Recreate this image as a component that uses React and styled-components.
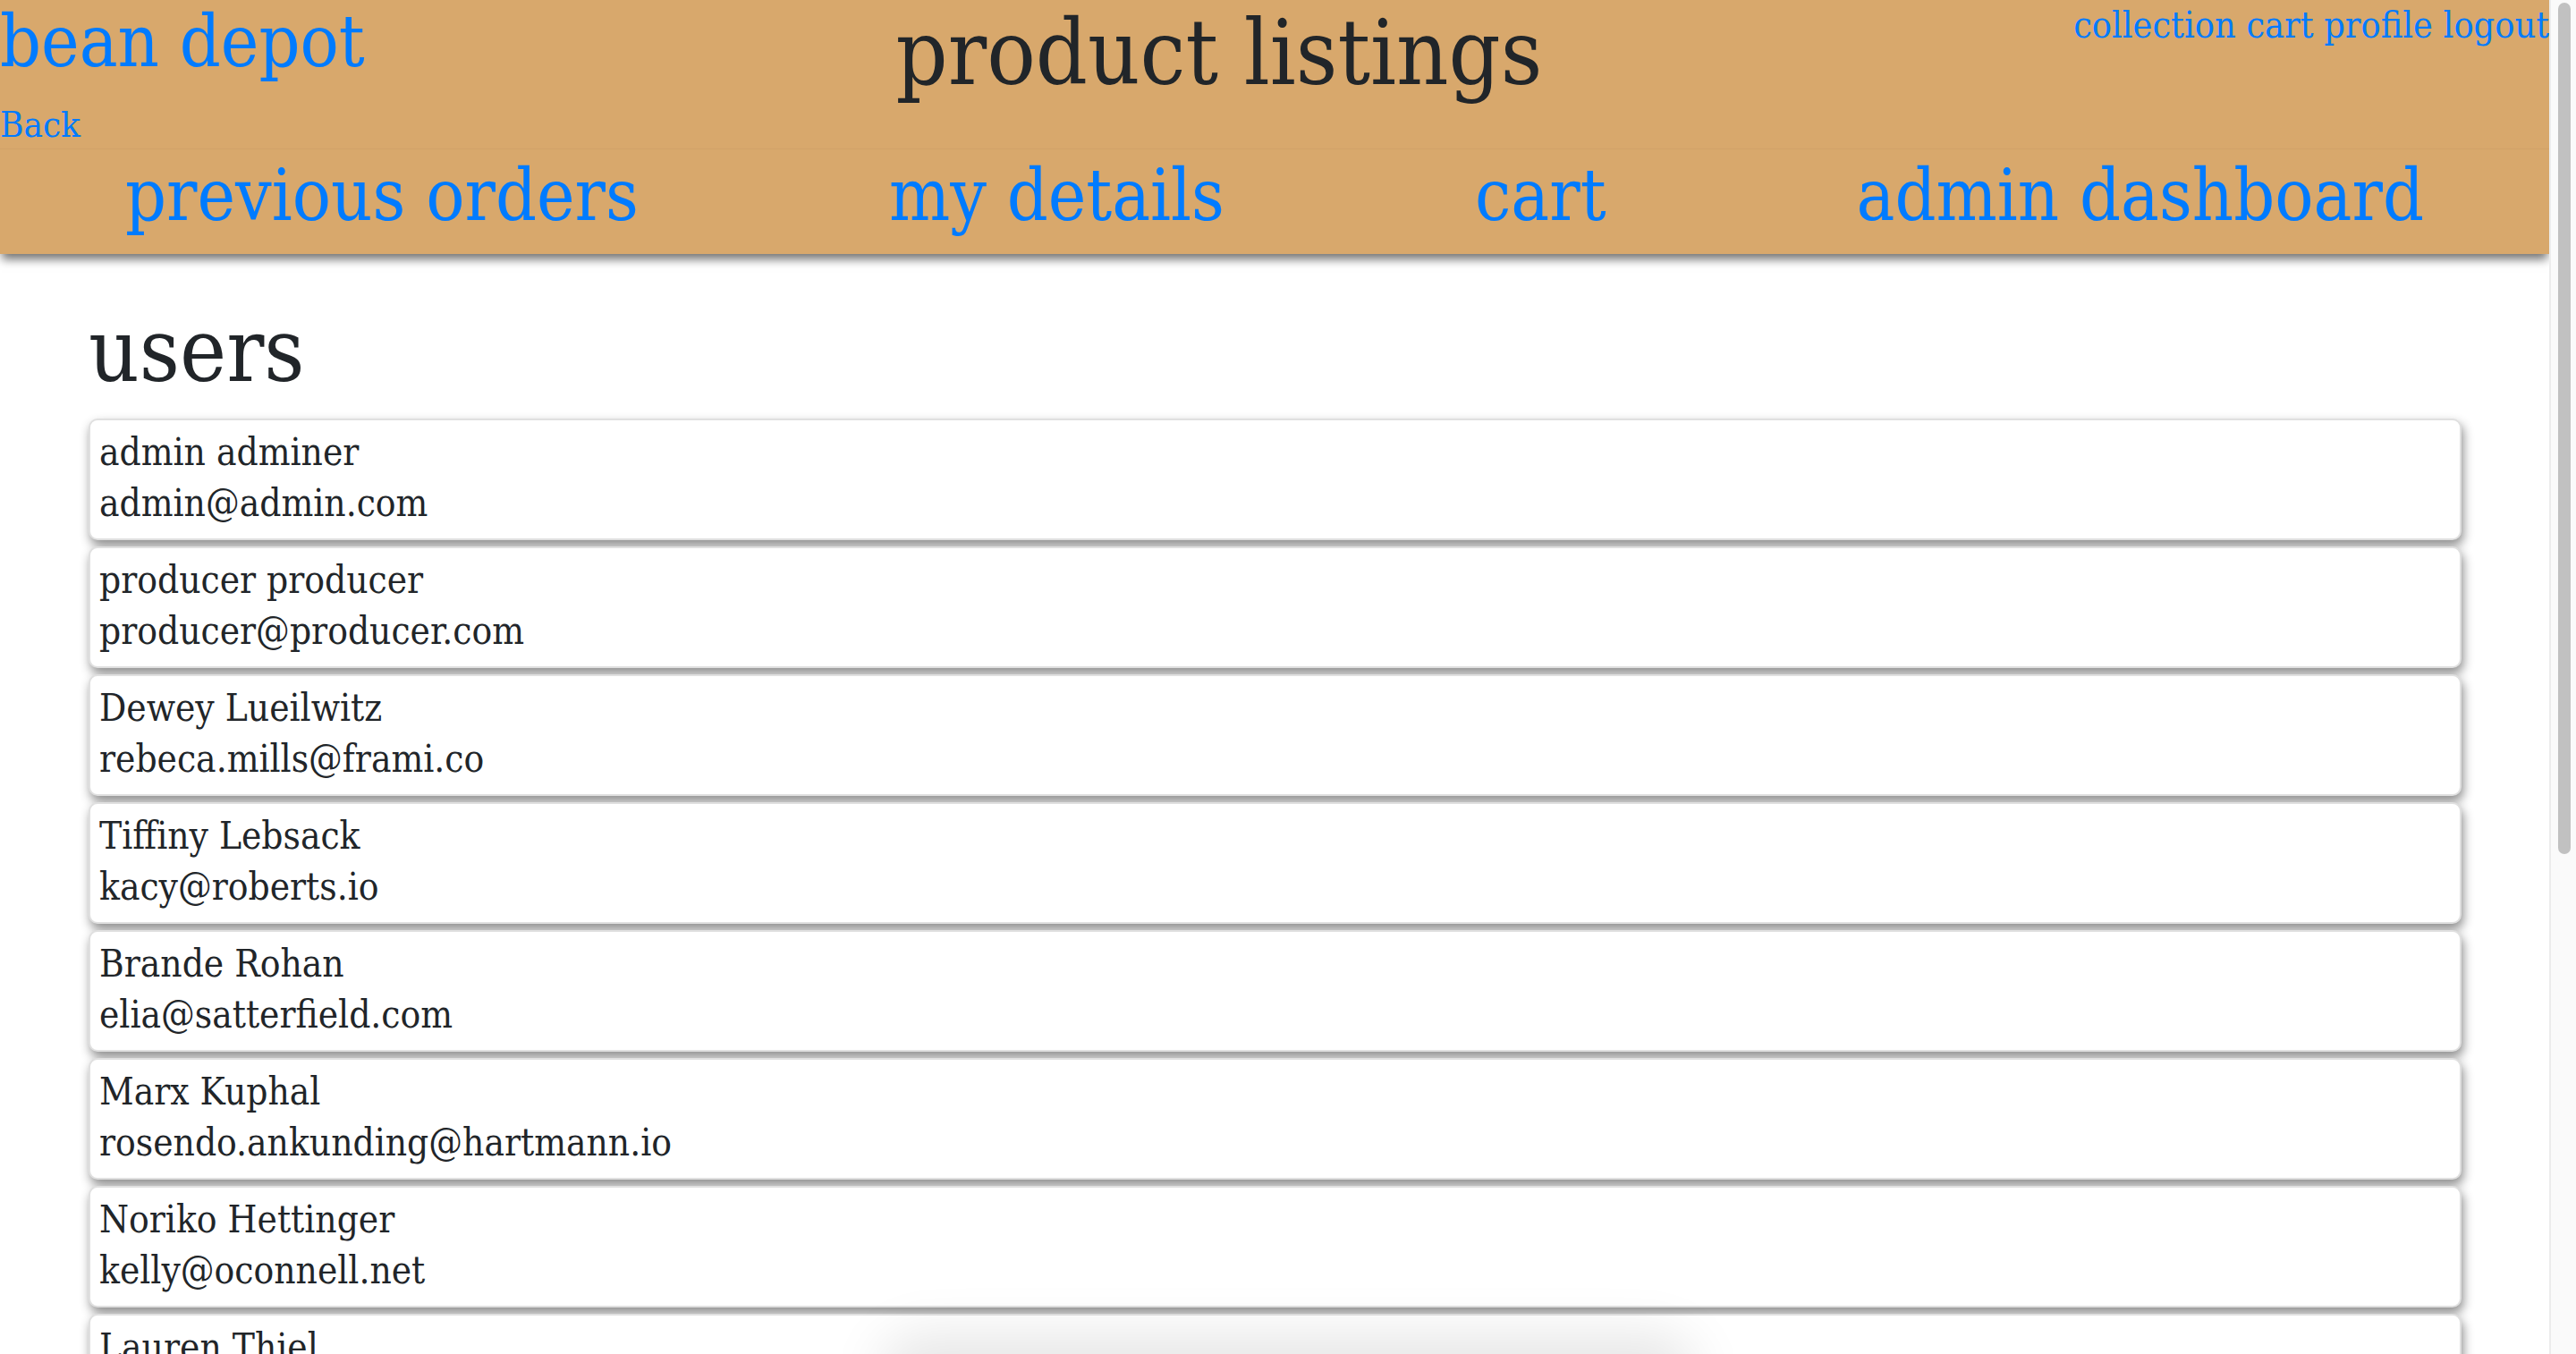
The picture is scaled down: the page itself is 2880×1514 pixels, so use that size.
import React from 'react'
import styled, { createGlobalStyle } from 'styled-components'

const GlobalStyle = createGlobalStyle`
  html, body {
    margin: 0;
    padding: 0;
    height: 100%;
    overflow: hidden;
    background: #fff;
  }
  body {
    font-family: "DejaVu Serif Condensed", "DejaVu Serif", serif;
    color: #212529;
  }
  a {
    color: #007bff;
    text-decoration: none;
  }
`

const Shell = styled.div`
  display: flex;
  height: 100vh;
`

const Page = styled.div`
  flex: 1;
  min-width: 0;
  overflow: hidden;
`

const ScrollRail = styled.div`
  width: 30px;
  box-sizing: border-box;
  padding: 3px 6px 0 8px;
  background: #fafafa;
  border-left: 2px solid #ececec;
`

const ScrollThumb = styled.div`
  height: 952px;
  border-radius: 8px;
  background: #c1c1c1;
`

const Navbar = styled.header`
  position: relative;
  z-index: 2;
  background: #d8a86c;
  box-shadow: 0 8px 10px -2px rgba(0, 0, 0, 0.55);
`

const TopRow = styled.div`
  display: flex;
  justify-content: space-between;
  align-items: flex-start;
  height: 166px;
`

const BrandBlock = styled.div`
  display: flex;
  flex-direction: column;
  align-items: flex-start;
`

const Brand = styled.a`
  font-size: 80px;
  line-height: 94px;
`

const BackLink = styled.a`
  margin-top: 21px;
  font-size: 40px;
  line-height: 48px;
`

const PageTitle = styled.h1`
  margin: 0;
  font-size: 101px;
  line-height: 118px;
  font-weight: 400;
`

const TopLinks = styled.nav`
  font-size: 41px;
  line-height: 56px;
  white-space: nowrap;
`

const NavRow = styled.nav`
  display: flex;
  justify-content: space-around;
  align-items: flex-start;
  height: 118px;
  box-sizing: border-box;
  border-top: 1px solid rgba(0, 0, 0, 0.03);
`

const NavLink = styled.a`
  font-size: 80px;
  line-height: 104px;
`

const Main = styled.main`
  padding: 0 98px 70px 99px;
`

const Heading = styled.h1`
  margin: 50px 0 18px;
  font-size: 98px;
  line-height: 116px;
  font-weight: 400;
`

const UserList = styled.ul`
  list-style: none;
  margin: 0;
  padding: 0;
  display: flex;
  flex-direction: column;
  gap: 7px;
`

const UserCard = styled.li`
  background: #fff;
  border: 2px solid #e0e0e0;
  border-radius: 10px;
  padding: 7px 10px 11px;
  font-size: 42px;
  line-height: 57px;
  box-shadow: 2px 6px 12px rgba(0, 0, 0, 0.45);
`

const Line = styled.div``

const DockShadow = styled.div`
  position: fixed;
  left: 1000px;
  width: 880px;
  top: 100%;
  height: 60px;
  border-radius: 30px;
  box-shadow: 0 -6px 60px 16px rgba(0, 0, 0, 0.1);
  pointer-events: none;
`

const users = [
  ['admin adminer', 'admin@admin.com'],
  ['producer producer', 'producer@producer.com'],
  ['Dewey Lueilwitz', 'rebeca.mills@frami.co'],
  ['Tiffiny Lebsack', 'kacy@roberts.io'],
  ['Brande Rohan', 'elia@satterfield.com'],
  ['Marx Kuphal', 'rosendo.ankunding@hartmann.io'],
  ['Noriko Hettinger', 'kelly@oconnell.net'],
  ['Lauren Thiel', 'jerold@mraz.biz'],
  ['Cleo Beahan', 'tamar@gutkowski.org'],
  ['Harley Schowalter', 'nell.kirlin@boyer.com'],
  ['Kimi Dach', 'pasquale@hegmann.info'],
  ['Odell Runte', 'maye.rau@kuhlman.co'],
  ['Verla Goyette', 'dennis@bins.name']
]

export default function App() {
  return (
    <>
      <GlobalStyle />
      <Shell>
        <Page>
          <Navbar>
            <TopRow>
              <BrandBlock>
                <Brand href="#">bean depot</Brand>
                <BackLink href="#">Back</BackLink>
              </BrandBlock>
              <PageTitle>product listings</PageTitle>
              <TopLinks>
                <a href="#">collection</a> <a href="#">cart</a>{' '}
                <a href="#">profile</a> <a href="#">logout</a>
              </TopLinks>
            </TopRow>
            <NavRow>
              <NavLink href="#">previous orders</NavLink>
              <NavLink href="#">my details</NavLink>
              <NavLink href="#">cart</NavLink>
              <NavLink href="#">admin dashboard</NavLink>
            </NavRow>
          </Navbar>
          <Main>
            <Heading>users</Heading>
            <UserList>
              {users.map(([name, email]) => (
                <UserCard key={email}>
                  <Line>{name}</Line>
                  <Line>{email}</Line>
                </UserCard>
              ))}
            </UserList>
          </Main>
        </Page>
        <ScrollRail>
          <ScrollThumb />
        </ScrollRail>
        <DockShadow />
      </Shell>
    </>
  )
}
